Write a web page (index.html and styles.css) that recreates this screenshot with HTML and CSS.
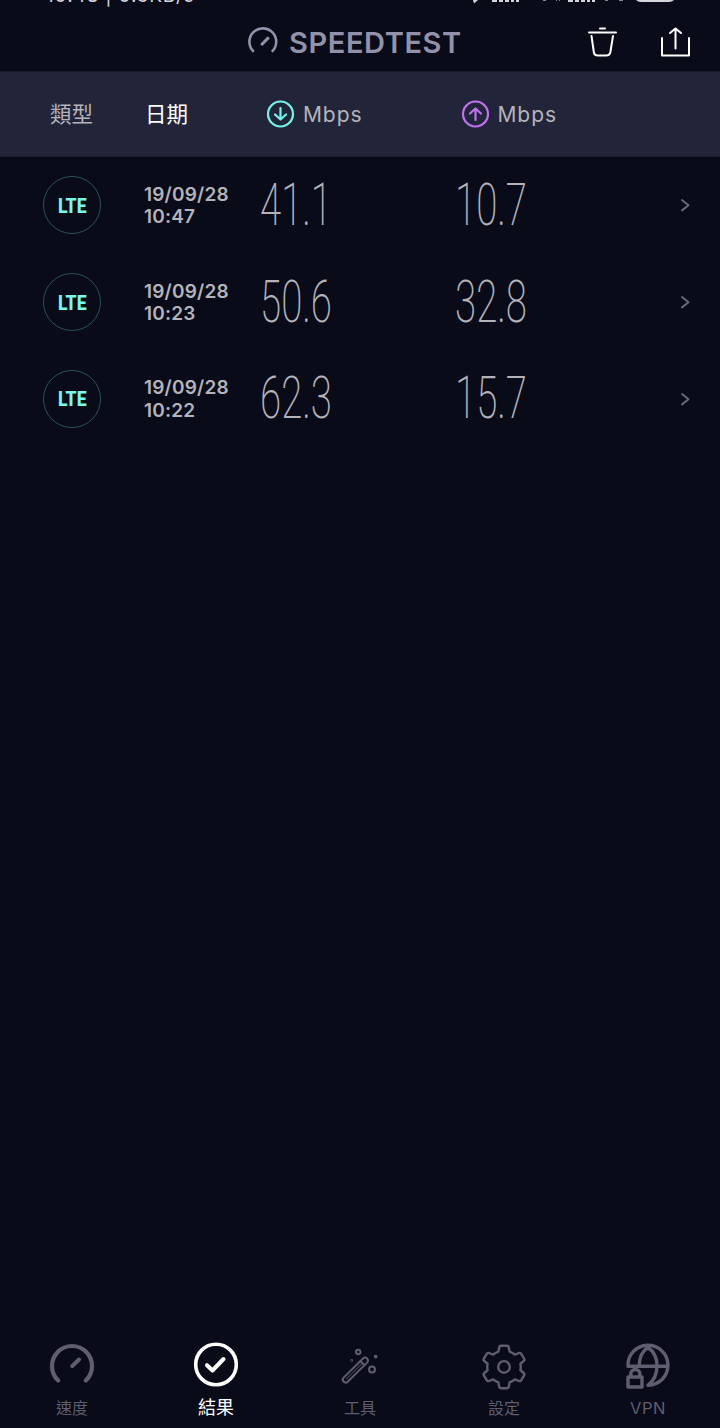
FILE: index.html
```html
<!DOCTYPE html>
<html lang="zh-Hant">
<head>
    <meta charset="utf-8">
    <title>Speedtest</title>
    <link rel="stylesheet" href="styles.css">
</head>
<body>
    <div class="app">
        <div class="status-bar">
            <span class="status-text">10:48 | 0.3KB/s</span>
            <svg class="status-icons" width="210" height="4" viewBox="0 0 210 4">
                <path d="M3 0h5l-4 3.4z"/>
                <path d="M22 0h5v2h-5zM29 0h4v2h-4zM35 0h4v2h-4zM41 0h3v2h-3zM46 0h3v2h-3z"/>
                <path d="M73 0h3v1h-3zM86 0h1v1h-1zM89 0h1v1h-1z" opacity=".6"/>
                <path d="M98 0h5v2h-5zM105 0h4v2h-4zM111 0h4v2h-4zM117 0h3v2h-3zM122 0h3v2h-3z"/>
                <path d="M135 0h3v1h-3zM149 0h4v1h-4z" opacity=".6"/>
                <path d="M166 0h38q-2 2-5 2h-28q-3 0-5-2z"/>
            </svg>
        </div>

        <header class="top-bar">
            <div class="brand">
                <svg width="32" height="32" viewBox="0 0 32 32">
                    <path d="M6.8 24.7A13.4 13.4 0 1 1 24.8 24.7" stroke-width="2.6"/>
                    <path d="M14.2 18L21.8 10.4" stroke-width="3"/>
                </svg>
                <span class="brand-name">SPEEDTEST</span>
            </div>
            <div class="actions">
                <svg width="30" height="32" viewBox="0 0 30 32">
                    <path d="M1 6.5h27M12 2.5h5M3.5 10l2.3 16q.5 3.5 4 3.5h8.400q3.500 0 4.200-3.500L25 10"/>
                </svg>
                <svg width="30" height="32" viewBox="0 0 30 32">
                    <path d="M1 12v17.500h27V12M14.500 22.500v-20M9 7l5.500-4.500L20 7"/>
                </svg>
            </div>
        </header>

        <div class="table-head">
            <span class="col-type">類型</span>
            <span class="col-date active">日期</span>
            <span class="col-speed">
                <svg class="download" width="28" height="28" viewBox="0 0 28 28">
                    <circle cx="13.5" cy="14" r="12.5"/>
                    <path d="M13.5 8v11.5M8 14.5l5.5 5 5.5-5"/>
                </svg>
                Mbps
            </span>
            <span class="col-speed">
                <svg class="upload" width="28" height="28" viewBox="0 0 28 28">
                    <circle cx="13.5" cy="14" r="12.5"/>
                    <path d="M13.5 20V8.5M8 13.5l5.5-5 5.5 5"/>
                </svg>
                Mbps
            </span>
        </div>

        <main class="results">
            <div class="row">
                <span class="badge"><b>LTE</b></span>
                <span class="date">19/09/28<br>10:47</span>
                <span class="speed"><b>41.1</b></span>
                <span class="speed"><b>10.7</b></span>
                <svg class="chevron" width="10" height="14" viewBox="0 0 10 14"><path d="M2 2l6.5 5.2L2 12.4"/></svg>
            </div>
            <div class="row">
                <span class="badge"><b>LTE</b></span>
                <span class="date">19/09/28<br>10:23</span>
                <span class="speed"><b>50.6</b></span>
                <span class="speed"><b>32.8</b></span>
                <svg class="chevron" width="10" height="14" viewBox="0 0 10 14"><path d="M2 2l6.5 5.2L2 12.4"/></svg>
            </div>
            <div class="row">
                <span class="badge"><b>LTE</b></span>
                <span class="date">19/09/28<br>10:22</span>
                <span class="speed"><b>62.3</b></span>
                <span class="speed"><b>15.7</b></span>
                <svg class="chevron" width="10" height="14" viewBox="0 0 10 14"><path d="M2 2l6.5 5.2L2 12.4"/></svg>
            </div>
        </main>

        <nav class="tab-bar">
            <a class="tab">
                <svg width="48" height="48" viewBox="0 0 48 48">
                    <path d="M10.2 38.5A20 20 0 1 1 37.8 38.5" stroke-width="4.2"/>
                    <path d="M24.2 24.2L31 17.5" stroke-width="4"/>
                </svg>
                <span>速度</span>
            </a>
            <a class="tab active">
                <svg width="48" height="48" viewBox="0 0 48 48">
                    <circle cx="24" cy="22.5" r="20.3" stroke-width="3.6"/>
                    <path d="M15 23.2l5.5 5.3L31.5 17" stroke-width="4"/>
                </svg>
                <span>結果</span>
            </a>
            <a class="tab">
                <svg width="48" height="48" viewBox="0 0 48 48" stroke-width="2">
                    <path d="M7.6 35.6L27 16.5a2.9 2.9 0 0 1 4.1 4.1L11.7 39.7a2.900 2.900 0 0 1-4.100-4.100zM24.500 19.200l4 4"/>
                    <path d="M10.500 36.800L25 22.500" stroke-width="1.200" opacity=".6"/>
                    <circle cx="22.200" cy="10" r="2.200"/>
                    <circle cx="36" cy="27.500" r="3"/>
                    <circle cx="39.700" cy="14.600" r=".9"/>
                    <circle cx="15.700" cy="18.400" r=".4"/>
                </svg>
                <span>工具</span>
            </a>
            <a class="tab">
                <svg width="48" height="48" viewBox="0 0 48 48" stroke-width="2.4">
                    <path d="M21 3.800h6q1.500 0 1.800 1.500l.8 4.300q3.300 1.200 5.200 3l4.200-1.600q1.500-.5 2.300.8l2.800 4.900q.8 1.300-.4 2.300l-3.300 2.900q.7 3.100 0 6.200l3.300 2.900q1.200 1 .4 2.300l-2.800 4.900q-.8 1.300-2.300.8l-4.200-1.600q-1.900 1.800-5.200 3l-.8 4.300q-.3 1.500-1.800 1.500h-6q-1.500 0-1.800-1.500l-.8-4.300q-3.300-1.200-5.200-3l-4.200 1.600q-1.500.5-2.300-.8l-2.800-4.900q-.8-1.300.4-2.300l3.300-2.900q-.7-3.100 0-6.200l-3.300-2.900q-1.200-1-.4-2.300l2.800-4.900q.8-1.300 2.300-.8l4.200 1.600q1.900-1.800 5.200-3l.8-4.300q.3-1.500 1.800-1.500z"/>
                    <circle cx="24" cy="24.900" r="5.800"/>
                </svg>
                <span>設定</span>
            </a>
            <a class="tab">
                <svg width="48" height="48" viewBox="0 0 48 48" stroke-width="3.4">
                    <path d="M4 24.300A20 20 0 1 1 24 43.200M4 24.300h39.500M15 24C15.500 14.500 19 8.500 24 5.500 30 9.500 33 15.500 33 24c0 8.500-3.500 15-9 19.200"/>
                    <path d="M4 35h14v10H4zM6.800 34.500V32a4.500 4.500 0 0 1 9 0v2.500"/>
                </svg>
                <span class="latin">VPN</span>
            </a>
        </nav>
    </div>
</body>
</html>
```
FILE: styles.css
```css
* {
    box-sizing: border-box;
}

body {
    margin: 0;
    background: #090b19;
    color: #b4b3b9;
    font-family: Inter, "Noto Sans CJK TC", sans-serif;
}

svg {
    display: block;
    flex: none;
    overflow: visible;
    fill: none;
    stroke: currentColor;
    stroke-linecap: round;
    stroke-linejoin: round;
}

.app {
    display: flex;
    flex-direction: column;
    width: 720px;
    height: 1428px;
    overflow: hidden;
}

.status-bar {
    display: flex;
    justify-content: space-between;
    height: 4px;
    padding: 0 46px 0 46px;
    color: #d5d5dc;
}

.status-text {
    align-self: flex-end;
    font-size: 19px;
    line-height: 17px;
    letter-spacing: 0.8px;
    white-space: nowrap;
}

.status-icons {
    margin-right: -6px;
    fill: currentColor;
    stroke: none;
}

.top-bar {
    display: grid;
    grid-template-columns: 247px 1fr auto;
    height: 67px;
    padding-right: 29px;
    align-items: center;
}

.brand {
    grid-column: 2;
    display: flex;
    align-items: center;
    gap: 10px;
    padding-top: 10px;
    color: #9293aa;
}

.brand svg {
    stroke-linecap: butt;
}

.brand-name {
    font-size: 29px;
    font-weight: 600;
    line-height: 32px;
    letter-spacing: 0.6px;
}

.actions {
    display: flex;
    gap: 43px;
    padding-top: 8px;
    color: #fff;
    stroke-width: 2;
}

.table-head {
    display: grid;
    grid-template-columns: 50px 95px 122px 194.5px 195px;
    height: 86px;
    align-items: center;
    background: #222539;
    border-top: 1px solid #1a1c2d;
    border-bottom: 1px solid #1a1c2d;
    font-size: 21.5px;
}

.col-type,
.col-date {
    padding-bottom: 3px;
}

.col-type {
    grid-column: 2;
}

.active {
    color: #fff;
}

.col-speed {
    display: flex;
    align-items: center;
    gap: 8px;
    font-size: 21px;
    letter-spacing: 0.9px;
    stroke-width: 2.2;
}

.col-date + .col-speed {
    grid-column: 4;
}

.download {
    color: #74f5ea;
}

.upload {
    color: #c172ef;
}

.results {
    flex: 1;
}

.row {
    display: grid;
    grid-template-columns: 101px 116px 195px 225px 10px;
    height: 96.7px;
    padding-left: 43px;
    align-items: center;
}

.badge {
    display: flex;
    width: 58px;
    height: 58px;
    align-items: center;
    justify-content: center;
    border: 1.5px solid #2a5257;
    border-radius: 50%;
    color: #79f7eb;
    font: 20px Roboto, sans-serif;
}

.badge b {
    padding-top: 1px;
    font-weight: 800;
    transform: scaleX(0.88);
}

.date {
    padding-top: 2px;
    font-size: 19px;
    font-weight: 600;
    line-height: 22.5px;
    letter-spacing: 0.2px;
}

.speed b {
    display: inline-block;
    padding-bottom: 1px;
    font-family: Roboto, sans-serif;
    font-size: 60px;
    font-weight: 200;
    line-height: 68px;
    transform: scaleX(0.64);
    transform-origin: left;
}

.chevron {
    color: #686876;
    stroke-width: 2;
}

.tab-bar {
    display: grid;
    grid-template-columns: repeat(5, 1fr);
    height: 88px;
    color: #5e5e70;
}

.tab {
    display: flex;
    flex-direction: column;
    align-items: center;
    padding-top: 2px;
    font-size: 16px;
    line-height: 36px;
}

.tab.active {
    color: #fff;
    font-size: 18px;
}

.latin {
    font-size: 16.5px;
    letter-spacing: 0.6px;
}
```
